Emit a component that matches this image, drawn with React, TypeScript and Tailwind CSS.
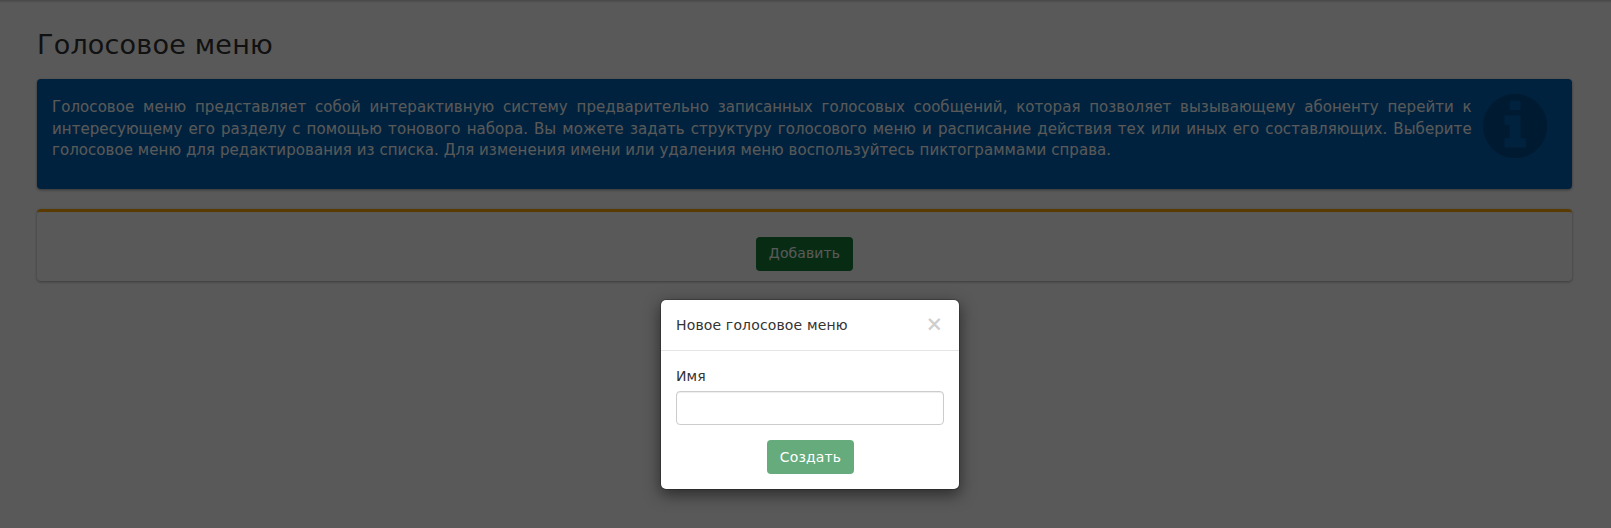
import React from 'react';

function InfoIcon() {
  return (
    <svg viewBox="128 128 1536 1536" className="h-[64.3px] w-[64.3px] shrink-0 fill-black/20" aria-hidden="true">
      <path d="M1152 1376v-160q0-14-9-23t-23-9h-96v-512q0-14-9-23t-23-9h-320q-14 0-23 9t-9 23v160q0 14 9 23t23 9h96v320h-96q-14 0-23 9t-9 23v160q0 14 9 23t23 9h448q14 0 23-9t9-23zm-128-896v-160q0-14-9-23t-23-9h-192q-14 0-23 9t-9 23v160q0 14 9 23t23 9h192q14 0 23-9t9-23zm640 416q0 209-103 385.5t-279.5 279.5-385.5 103-385.5-103-279.5-279.5-103-385.5 103-385.5 279.5-279.5 385.5-103 385.5 103 279.5 279.5 103 385.5z" />
    </svg>
  );
}

function CreateDialog() {
  return (
    <div
      role="dialog"
      className="h-[191px] w-[300px] rounded-md border border-black/20 bg-white bg-clip-padding text-[14px] leading-5 tracking-[0.15px] text-[#333] shadow-[0_5px_15px_rgba(0,0,0,0.5)]"
    >
      <div className="flex h-[51px] items-center justify-between border-b border-[#e5e5e5] px-[15px]">
        <h4>Новое голосовое меню</h4>
        <button className="pr-px pb-[2px] text-[21px] leading-none font-bold tracking-normal text-black/20">×</button>
      </div>
      <form className="flex flex-col px-[15px] pt-[15px]">
        <label className="mb-[5px]">Имя</label>
        <input className="h-[34px] w-full rounded border border-[#ccc] px-3 shadow-[inset_0_1px_1px_rgba(0,0,0,0.075)] outline-none" />
        <button type="button" className="mt-[15px] h-[34px] w-[87px] self-center rounded bg-[#157f37] pl-px text-white opacity-65">
          Создать
        </button>
      </form>
    </div>
  );
}

export default function App() {
  return (
    <div className="relative h-[528px] overflow-hidden bg-white font-['DejaVu_Sans',sans-serif] text-[#333]">
      <div className="h-[3px] bg-linear-to-b from-black/20 to-transparent" />
      <div className="px-[37px] pr-[39px]">
        <h1 className="h-[76px] pt-[25px] text-[27px] leading-[34px] tracking-[0.2px]">Голосовое меню</h1>
        <section className="flex h-[110px] items-start gap-[11px] rounded bg-[#0061b1] pt-[15px] pr-[25px] pl-[15px] shadow-[0_1px_3px_rgba(0,0,0,0.4)]">
          <p className="flex-1 pt-[3.4px] text-justify text-[15px] leading-[21.43px] tracking-[0.06px] text-white">
            Голосовое меню представляет собой интерактивную систему предварительно записанных голосовых сообщений,
            которая позволяет вызывающему абоненту перейти к интересующему его разделу с помощью тонового набора. Вы
            можете задать структуру голосового меню и расписание действия тех или иных его составляющих. Выберите
            голосовое меню для редактирования из списка. Для изменения имени или удаления меню воспользуйтесь
            пиктограммами справа.
          </p>
          <InfoIcon />
        </section>
        <section className="mt-[20px] flex h-[72px] justify-center rounded border-t-[3px] border-[#ffa500] bg-white pt-[25px] shadow-[0_1px_3px_rgba(0,0,0,0.35)]">
          <button className="h-[34px] w-[97px] rounded bg-[#157f37] pb-[2px] text-[14px] leading-5 tracking-[0.1px] text-white">
            Добавить
          </button>
        </section>
      </div>
      <div className="absolute inset-0 flex justify-center bg-black/65 pt-[299px] pl-[9px]">
        <CreateDialog />
      </div>
    </div>
  );
}
